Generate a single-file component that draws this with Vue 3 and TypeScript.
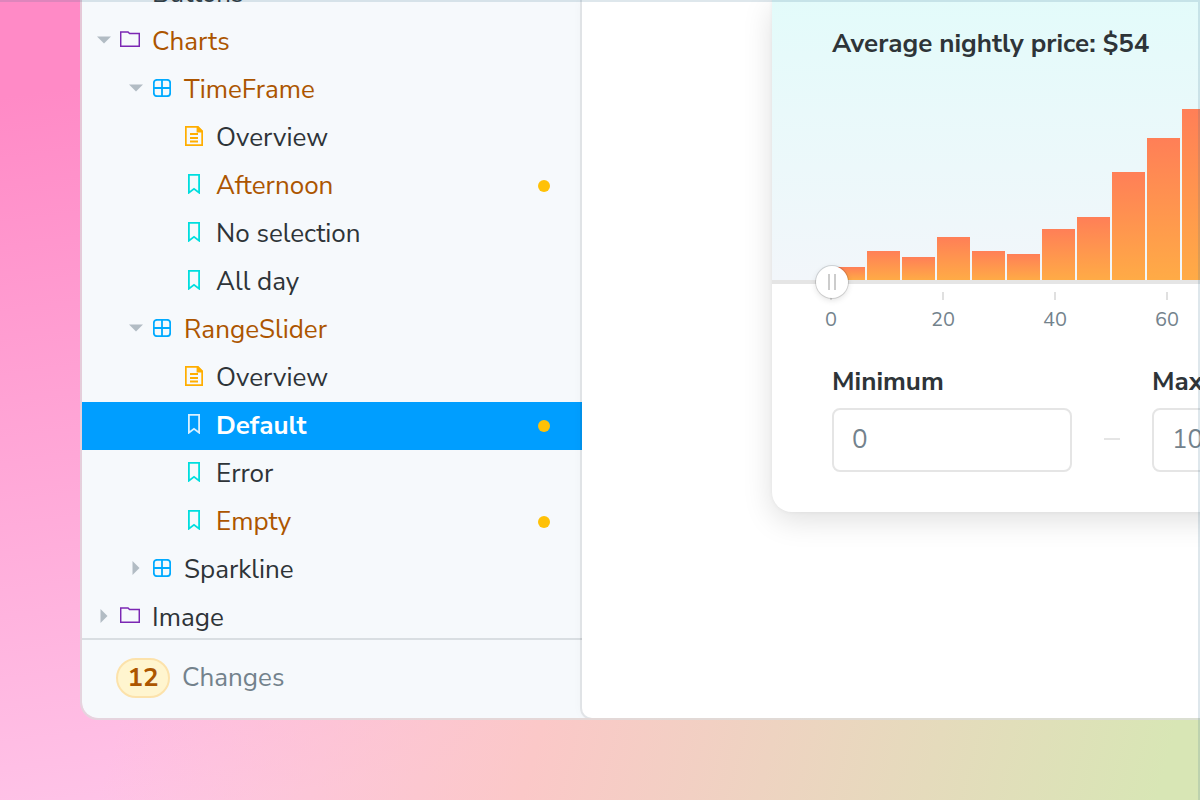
<script setup lang="ts">
import { ref } from 'vue'

type Kind = 'folder' | 'component' | 'doc' | 'story'

interface TreeItem {
  id: number
  label: string
  kind: Kind
  depth: number
  open?: boolean
  changed?: boolean
  dot?: boolean
}

const items: TreeItem[] = [
  { id: 1, label: 'Buttons', kind: 'folder', depth: 0 },
  { id: 2, label: 'Charts', kind: 'folder', depth: 0, open: true, changed: true },
  { id: 3, label: 'TimeFrame', kind: 'component', depth: 1, open: true, changed: true },
  { id: 4, label: 'Overview', kind: 'doc', depth: 2 },
  { id: 5, label: 'Afternoon', kind: 'story', depth: 2, changed: true, dot: true },
  { id: 6, label: 'No selection', kind: 'story', depth: 2 },
  { id: 7, label: 'All day', kind: 'story', depth: 2 },
  { id: 8, label: 'RangeSlider', kind: 'component', depth: 1, open: true, changed: true },
  { id: 9, label: 'Overview', kind: 'doc', depth: 2 },
  { id: 10, label: 'Default', kind: 'story', depth: 2, dot: true },
  { id: 11, label: 'Error', kind: 'story', depth: 2 },
  { id: 12, label: 'Empty', kind: 'story', depth: 2, changed: true, dot: true },
  { id: 13, label: 'Sparkline', kind: 'component', depth: 1, open: false },
  { id: 14, label: 'Image', kind: 'folder', depth: 0, open: false },
]

const selected = ref(10)
const minimum = ref('0')
const maximum = ref('100')
const bars: number[] = [13, 29, 23, 43, 29, 26, 51, 63, 108, 142, 171, 190]
const ticks: number[] = [0, 20, 40, 60, 80]
</script>

<template>
  <div class="stage">
    <div class="window">
      <aside class="sidebar">
        <nav class="tree" aria-label="Stories">
          <button
            v-for="item in items"
            :key="item.id"
            type="button"
            class="row"
            :class="['depth-' + item.depth, { changed: item.changed, selected: selected === item.id }]"
            :aria-expanded="item.open"
            @click="selected = item.id"
          >
            <span class="caret">
              <svg v-if="item.open === true" width="14" height="8" viewBox="0 0 14 8" aria-hidden="true"><path d="M0 0.5h14L7 7.5z" /></svg>
              <svg v-else-if="item.open === false" width="8" height="14" viewBox="0 0 8 14" aria-hidden="true"><path d="M0.5 0v14L7.5 7z" /></svg>
            </span>
            <span class="icon" :class="item.kind">
              <svg v-if="item.kind === 'folder'" width="20" height="18" viewBox="0 0 20 18" aria-hidden="true"><path d="M0.7 0.9h7.3l1.6 1.6h9.7v12.8H0.7z" /></svg>
              <svg v-else-if="item.kind === 'component'" width="18" height="18" viewBox="0 0 18 18" aria-hidden="true"><rect x="0.8" y="0.8" width="16.4" height="16.4" rx="3.2" /><path d="M9 1v16M1 9h16" /></svg>
              <svg v-else-if="item.kind === 'doc'" width="18" height="20" viewBox="0 0 18 20" aria-hidden="true"><path d="M0.8 0.8h12l4.4 4.4v14H0.8zM5 8h8M5 12h8M5 15.5h8" /><path class="fold" d="M12.5 1v4.5H17z" /></svg>
              <svg v-else width="12" height="20" viewBox="0 0 12 20" aria-hidden="true"><path d="M0.9 0.8h10.2v17.9L6 14.8 0.9 18.7z" /></svg>
            </span>
            <span class="label">{{ item.label }}</span>
            <span v-if="item.dot" class="dot"></span>
          </button>
        </nav>
        <footer class="changes">
          <span class="count">12</span>
          <span>Changes</span>
        </footer>
      </aside>

      <main class="canvas">
        <section class="card">
          <div class="plot">
            <h2>Average nightly price: $54</h2>
            <div class="bars">
              <span v-for="(bar, i) in bars" :key="i" class="bar" :style="{ height: bar + 'px' }"></span>
            </div>
          </div>
          <div class="track">
            <button type="button" class="handle" aria-label="Minimum price"></button>
          </div>
          <div class="scale">
            <span v-for="tick in ticks" :key="tick" class="tick">{{ tick }}</span>
          </div>
          <div class="fields">
            <div class="field">
              <label for="minimum">Minimum</label>
              <input id="minimum" v-model="minimum" type="text" />
            </div>
            <span class="dash"></span>
            <div class="field">
              <label for="maximum">Maximum</label>
              <input id="maximum" v-model="maximum" type="text" />
            </div>
          </div>
        </section>
      </main>
    </div>
  </div>
</template>

<style>
body {
  margin: 0;
}
</style>

<style scoped>
.stage {
  position: relative;
  box-sizing: border-box;
  height: 100vh;
  padding: 0 0 80px 80px;
  overflow: hidden;
  font-family: "Nunito Sans", Nunito, Lato, sans-serif;
  font-size: 26px;
  line-height: 32px;
  color: #2e3438;
  background:
    linear-gradient(105deg, rgba(255, 196, 232, 0) 22%, #fbc8c8 52%, #d8e6b5 97%),
    linear-gradient(172deg, #ff8ac6 10%, #ffc4e8 86%);
}

.stage::after {
  content: "";
  position: absolute;
  inset: 0;
  border-top: 2px solid rgba(60, 110, 140, 0.17);
  border-right: 2px solid rgba(60, 110, 140, 0.17);
  pointer-events: none;
}

.window {
  box-sizing: border-box;
  display: flex;
  height: 100%;
  border: solid rgba(220, 220, 220, 0.75);
  border-width: 0 0 2px 2px;
  border-bottom-left-radius: 18px;
  background: #f6f9fc;
  background-clip: padding-box;
  overflow: hidden;
}

.sidebar {
  display: flex;
  flex-direction: column;
  flex: 0 0 500px;
  min-width: 0;
}

.tree {
  display: flex;
  flex: 1;
  flex-direction: column;
  justify-content: flex-end;
  min-height: 0;
  overflow: hidden;
}

.row {
  box-sizing: border-box;
  display: flex;
  flex: none;
  align-items: center;
  width: 100%;
  height: 48px;
  padding: 0 32px 0 12px;
  border: 0;
  background: none;
  font: inherit;
  color: inherit;
  text-align: left;
}

.row:last-child {
  margin-bottom: -4px;
}

.depth-1 {
  padding-left: 44px;
}

.depth-2 {
  padding-left: 76px;
}

.caret {
  display: flex;
  flex: 0 0 20px;
  justify-content: center;
  padding-bottom: 4px;
}

.caret svg {
  fill: #b2bcc4;
}

.icon {
  display: flex;
  flex: 0 0 32px;
  justify-content: center;
  margin-right: 6px;
  padding-bottom: 4px;
  fill: none;
  stroke-width: 1.8;
}

.folder {
  stroke: #7b27b3;
  stroke-width: 1.5;
}

.component {
  stroke: #00aaff;
}

.doc {
  stroke: #ffae00;
}

.fold {
  fill: #ffae00;
}

.story {
  stroke: #00dede;
}

.changed {
  color: #ac5500;
}

.selected {
  background: #009eff;
  color: #fff;
  font-weight: 700;
}

.selected .icon {
  stroke: #d9f0ff;
}

.dot {
  width: 12px;
  height: 12px;
  margin-left: auto;
  border-radius: 50%;
  background: #ffc107;
}

.changes {
  box-sizing: border-box;
  display: flex;
  flex: 0 0 80px;
  align-items: center;
  gap: 12px;
  padding: 0 34px 2px;
  border-top: 2px solid #d9dee2;
  color: #73828c;
}

.count {
  box-sizing: border-box;
  width: 54px;
  border: 2px solid #fce2ab;
  border-radius: 20px;
  background: #fff5cf;
  color: #ac5500;
  font-weight: 700;
  line-height: 36px;
  text-align: center;
}

.canvas {
  flex: 1;
  min-width: 0;
  padding-left: 190px;
  border-bottom-left-radius: 10px;
  background: #fff;
  box-shadow: 0 0 0 2px rgba(0, 0, 0, 0.07), 0 0 12px rgba(0, 0, 0, 0.04);
  overflow: hidden;
}

.card {
  width: 680px;
  border-radius: 0 0 20px 20px;
  background: #fff;
  box-shadow: 0 8px 30px rgba(0, 0, 0, 0.13), 0 0 4px rgba(0, 0, 0, 0.05);
}

.plot {
  display: flex;
  flex-direction: column;
  justify-content: space-between;
  box-sizing: border-box;
  height: 280px;
  padding: 28px 60px 0;
  background: linear-gradient(#e3fbfa, #f2f6fa);
}

h2 {
  margin: 0;
  font-size: 26px;
  font-weight: 700;
  line-height: 32px;
}

.bars {
  display: flex;
  align-items: flex-end;
  gap: 2px;
}

.bar {
  flex: 0 0 33px;
  background: linear-gradient(#ff7f57, #ffab46);
}

.track {
  display: flex;
  align-items: center;
  height: 4px;
  padding-left: 44px;
  background: #e5e5e5;
}

.handle {
  position: relative;
  flex: none;
  box-sizing: border-box;
  width: 32px;
  height: 32px;
  padding: 0;
  border: 0;
  border-radius: 50%;
  background: #fff;
  box-shadow: 0 0 0 1px rgba(0, 0, 0, 0.13), 0 2px 6px rgba(0, 0, 0, 0.13);
}

.handle::after {
  content: "";
  position: absolute;
  top: 8px;
  left: 12px;
  width: 4px;
  height: 16px;
  border: solid #ccc;
  border-width: 0 2px;
}

.scale {
  display: flex;
  padding: 8px 0 0 3px;
}

.tick {
  display: flex;
  flex: 0 0 112px;
  flex-direction: column;
  align-items: center;
  font-size: 20px;
  line-height: 24px;
  color: #73828c;
}

.tick::before {
  content: "";
  width: 2px;
  height: 8px;
  margin-bottom: 8px;
  background: #e0e0e0;
}

.fields {
  display: flex;
  align-items: flex-end;
  padding: 34px 60px 40px;
}

.field {
  display: flex;
  flex: 1;
  flex-direction: column;
  gap: 10px;
  min-width: 0;
}

label {
  font-weight: 700;
}

input {
  box-sizing: border-box;
  width: 100%;
  height: 64px;
  padding: 0 18px 2px;
  border: 2px solid #e5e5e5;
  border-radius: 8px;
  background: #fff;
  color: #73828c;
  font: inherit;
}

.dash {
  width: 16px;
  height: 2px;
  margin: 0 32px 32px;
  background: #e5e5e5;
}
</style>
